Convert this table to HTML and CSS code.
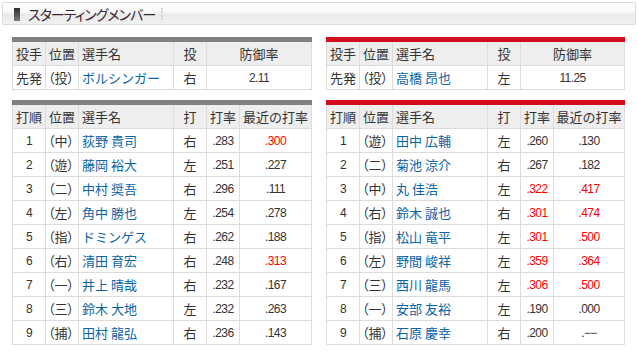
FILE: index.html
```html
<!DOCTYPE html>
<html lang="ja">
<head>
<meta charset="utf-8">
<link rel="stylesheet" href="styles.css">
</head>
<body>
<div class="title">
  <span class="title-mark"></span>
  <h2 class="title-text">スターティングメンバー</h2>
  <span class="title-sep"></span>
</div>
<div class="teams">
  <div class="team team-away">
    <table class="grid">
      <colgroup><col class="c1"><col class="c2"><col class="c3"><col class="c4"><col class="c5p"></colgroup>
      <thead><tr><th>投手</th><th>位置</th><th>選手名</th><th class="ctr">投</th><th class="ctr">防御率</th></tr></thead>
      <tbody>
        <tr><td>先発</td><td class="pos">（投）</td><td><a class="name">ボルシンガー</a></td><td class="ctr">右</td><td class="ctr num">2.11</td></tr>
      </tbody>
    </table>
    <table class="grid">
      <colgroup><col class="c1"><col class="c2"><col class="c3"><col class="c4"><col class="c5"><col class="c6"></colgroup>
      <thead><tr><th>打順</th><th>位置</th><th>選手名</th><th class="ctr">打</th><th class="ctr">打率</th><th class="ctr">最近の打率</th></tr></thead>
      <tbody>
        <tr><td class="ctr num">1</td><td class="pos">（中）</td><td><a class="name">荻野 貴司</a></td><td class="ctr">右</td><td class="ctr num">.283</td><td class="ctr num hot">.300</td></tr>
        <tr><td class="ctr num">2</td><td class="pos">（遊）</td><td><a class="name">藤岡 裕大</a></td><td class="ctr">左</td><td class="ctr num">.251</td><td class="ctr num">.227</td></tr>
        <tr><td class="ctr num">3</td><td class="pos">（二）</td><td><a class="name">中村 奨吾</a></td><td class="ctr">右</td><td class="ctr num">.296</td><td class="ctr num">.111</td></tr>
        <tr><td class="ctr num">4</td><td class="pos">（左）</td><td><a class="name">角中 勝也</a></td><td class="ctr">左</td><td class="ctr num">.254</td><td class="ctr num">.278</td></tr>
        <tr><td class="ctr num">5</td><td class="pos">（指）</td><td><a class="name">ドミンゲス</a></td><td class="ctr">右</td><td class="ctr num">.262</td><td class="ctr num">.188</td></tr>
        <tr><td class="ctr num">6</td><td class="pos">（右）</td><td><a class="name">清田 育宏</a></td><td class="ctr">右</td><td class="ctr num">.248</td><td class="ctr num hot">.313</td></tr>
        <tr><td class="ctr num">7</td><td class="pos">（一）</td><td><a class="name">井上 晴哉</a></td><td class="ctr">右</td><td class="ctr num">.232</td><td class="ctr num">.167</td></tr>
        <tr><td class="ctr num">8</td><td class="pos">（三）</td><td><a class="name">鈴木 大地</a></td><td class="ctr">左</td><td class="ctr num">.232</td><td class="ctr num">.263</td></tr>
        <tr><td class="ctr num">9</td><td class="pos">（捕）</td><td><a class="name">田村 龍弘</a></td><td class="ctr">右</td><td class="ctr num">.236</td><td class="ctr num">.143</td></tr>
      </tbody>
    </table>
  </div>
  <div class="team team-home">
    <table class="grid">
      <colgroup><col class="c1"><col class="c2"><col class="c3"><col class="c4"><col class="c5p"></colgroup>
      <thead><tr><th>投手</th><th>位置</th><th>選手名</th><th class="ctr">投</th><th class="ctr">防御率</th></tr></thead>
      <tbody>
        <tr><td>先発</td><td class="pos">（投）</td><td><a class="name">高橋 昂也</a></td><td class="ctr">左</td><td class="ctr num">11.25</td></tr>
      </tbody>
    </table>
    <table class="grid">
      <colgroup><col class="c1"><col class="c2"><col class="c3"><col class="c4"><col class="c5"><col class="c6"></colgroup>
      <thead><tr><th>打順</th><th>位置</th><th>選手名</th><th class="ctr">打</th><th class="ctr">打率</th><th class="ctr">最近の打率</th></tr></thead>
      <tbody>
        <tr><td class="ctr num">1</td><td class="pos">（遊）</td><td><a class="name">田中 広輔</a></td><td class="ctr">左</td><td class="ctr num">.260</td><td class="ctr num">.130</td></tr>
        <tr><td class="ctr num">2</td><td class="pos">（二）</td><td><a class="name">菊池 涼介</a></td><td class="ctr">右</td><td class="ctr num">.267</td><td class="ctr num">.182</td></tr>
        <tr><td class="ctr num">3</td><td class="pos">（中）</td><td><a class="name">丸 佳浩</a></td><td class="ctr">左</td><td class="ctr num hot">.322</td><td class="ctr num hot">.417</td></tr>
        <tr><td class="ctr num">4</td><td class="pos">（右）</td><td><a class="name">鈴木 誠也</a></td><td class="ctr">右</td><td class="ctr num hot">.301</td><td class="ctr num hot">.474</td></tr>
        <tr><td class="ctr num">5</td><td class="pos">（指）</td><td><a class="name">松山 竜平</a></td><td class="ctr">左</td><td class="ctr num hot">.301</td><td class="ctr num hot">.500</td></tr>
        <tr><td class="ctr num">6</td><td class="pos">（左）</td><td><a class="name">野間 峻祥</a></td><td class="ctr">左</td><td class="ctr num hot">.359</td><td class="ctr num hot">.364</td></tr>
        <tr><td class="ctr num">7</td><td class="pos">（三）</td><td><a class="name">西川 龍馬</a></td><td class="ctr">左</td><td class="ctr num hot">.306</td><td class="ctr num hot">.500</td></tr>
        <tr><td class="ctr num">8</td><td class="pos">（一）</td><td><a class="name">安部 友裕</a></td><td class="ctr">左</td><td class="ctr num">.190</td><td class="ctr num">.000</td></tr>
        <tr><td class="ctr num">9</td><td class="pos">（捕）</td><td><a class="name">石原 慶幸</a></td><td class="ctr">右</td><td class="ctr num">.200</td><td class="ctr num">.−−</td></tr>
      </tbody>
    </table>
  </div>
</div>
</body>
</html>
```

FILE: styles.css
```css
html, body {
  margin: 0;
  padding: 0;
  background: #fff;
}
body {
  font-family: "Noto Sans CJK JP", sans-serif;
  font-size: 13px;
  color: #333;
  width: 638px;
}
.title {
  margin: 2px 2px 0 2px;
  height: 21px;
  border: 1px solid #dcdcdc;
  border-radius: 2px;
  background: linear-gradient(to bottom, #ffffff 0%, #f7f7f7 45%, #e9e9e9 55%, #f1f1f1 100%);
  display: flex;
  align-items: center;
  padding-left: 11px;
}
.title-mark {
  width: 6px;
  height: 13px;
  background: linear-gradient(to bottom, #2e2e2e, #7a7a7a);
  margin-top: 1px;
}
.title-text {
  margin: 0 0 0 8px;
  font-size: 14px;
  font-weight: normal;
  color: #3a2630;
  font-feature-settings: "palt";
  letter-spacing: -1px;
  line-height: 1;
}
.title-sep {
  width: 0;
  height: 12px;
  border-left: 2px dotted #d4d4d4;
  margin-left: 6px;
  margin-top: 1px;
}
.teams {
  display: grid;
  grid-template-columns: 300px 299px;
  column-gap: 14px;
  padding: 12px 0 0 12px;
}
.team {
  display: flex;
  flex-direction: column;
  row-gap: 10px;
}
.grid {
  width: 100%;
  border-collapse: collapse;
  table-layout: fixed;
}
.team-away .grid { border-top: 5px solid #808080; }
.team-home .grid { border-top: 5px solid #d40d1e; }
.grid th, .grid td {
  border: 1px solid #dcdcdc;
  height: 23px;
  padding: 0 0 0 3px;
  font-weight: normal;
  text-align: left;
  white-space: nowrap;
  line-height: 16px;
  vertical-align: middle;
  overflow: hidden;
}
.grid th { background: #eeeeee; }
.grid td { background: #fff; }
.grid .pos {
  font-feature-settings: "palt";
  padding-left: 2px;
}
.grid .ctr { text-align: center; padding: 0; }
.grid .num {
  font-family: "Liberation Sans", sans-serif;
  font-size: 12px;
  letter-spacing: -0.6px;
}
.grid .hot { color: #ff0000; }
.c1 { width: 33px; }
.c2 { width: 33px; }
.c3 { width: 95px; }
.c4 { width: 33px; }
.c5 { width: 33px; }
.c6 { width: auto; }
.c5p { width: auto; }
.name {
  color: #0a64a8;
  text-decoration: none;
}
```
